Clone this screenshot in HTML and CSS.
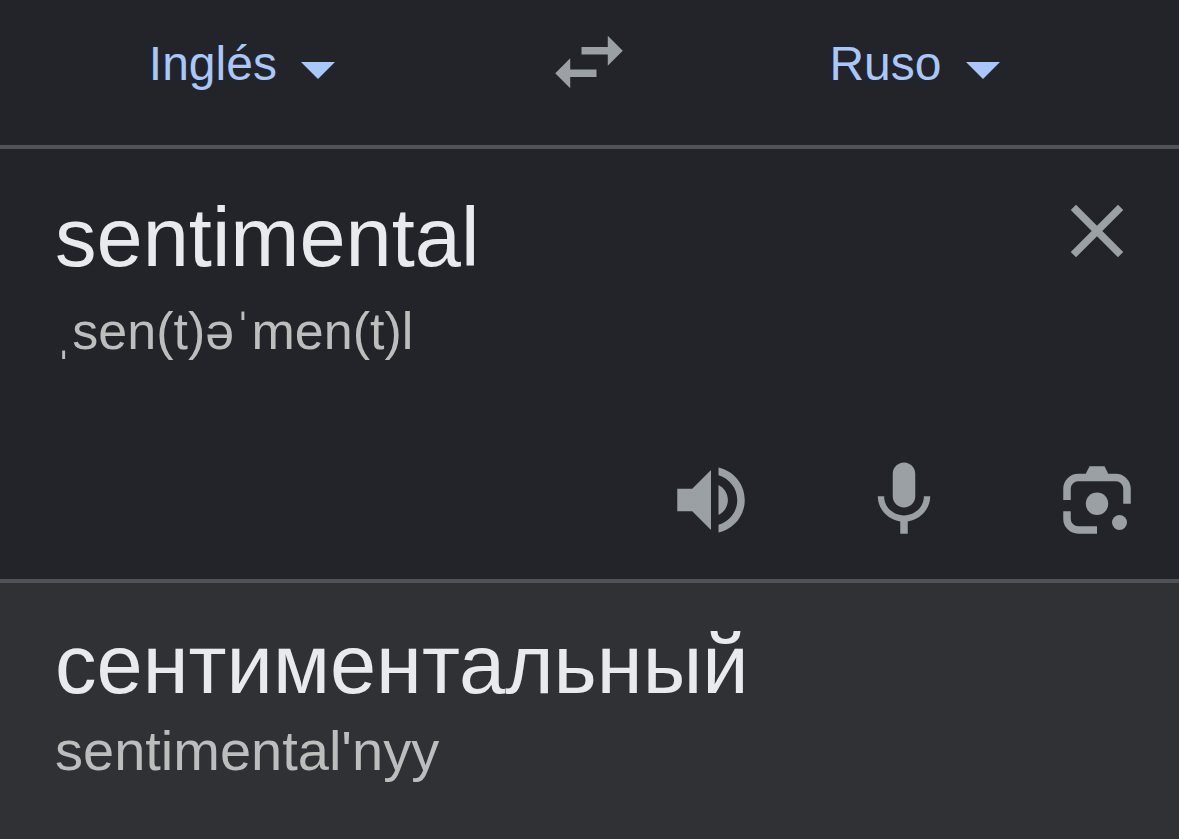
FILE: index.html
```html
<!DOCTYPE html>
<html lang="es">
<head>
<meta charset="utf-8">
<meta name="viewport" content="width=device-width, initial-scale=1">
<title>Traductor</title>
<link rel="stylesheet" href="styles.css">
</head>
<body>
<header class="languages">
  <label class="picker">
    <select class="picker-select" aria-label="Idioma de origen"><option>Inglés</option></select>
    <svg class="caret" viewBox="0 0 34 17" aria-hidden="true"><path d="M0 0h34L17 17z"/></svg>
  </label>
  <button class="icon-button" type="button" aria-label="Intercambiar idiomas">
    <svg class="icon" viewBox="0 0 24 24" aria-hidden="true"><path d="M6.99 11 3 15l3.99 4v-3H14v-2H6.99v-3zM21 9l-3.99-4v3H10v2h7.01v3L21 9z"/></svg>
  </button>
  <label class="picker">
    <select class="picker-select" aria-label="Idioma de destino"><option>Ruso</option></select>
    <svg class="caret" viewBox="0 0 34 17" aria-hidden="true"><path d="M0 0h34L17 17z"/></svg>
  </label>
</header>
<main class="translator">
  <section class="source">
    <div class="source-top">
      <div class="source-text">
        <input class="word" type="text" value="sentimental" aria-label="Texto de origen" spellcheck="false">
        <p class="phonetic">ˌsen(t)əˈmen(t)l</p>
      </div>
      <button class="icon-button" type="button" aria-label="Borrar texto">
        <svg class="icon" viewBox="0 0 24 24" aria-hidden="true"><path d="M19 6.41 17.59 5 12 10.59 6.41 5 5 6.41 10.59 12 5 17.59 6.41 19 12 13.41 17.59 19 19 17.59 13.41 12z"/></svg>
      </button>
    </div>
    <div class="actions">
      <button class="icon-button" type="button" aria-label="Escuchar">
        <svg class="icon" viewBox="0 0 24 24" aria-hidden="true"><path d="M3 9v6h4l5 5V4L7 9H3zm13.5 3c0-1.77-1.02-3.29-2.5-4.03v8.05c1.48-.73 2.5-2.25 2.5-4.02zM14 3.33v2.06c2.89.86 5 3.44 5 6.61s-2.11 5.75-5 6.61v2.06c4.01-.91 7-4.39 7-8.67s-2.99-7.76-7-8.67z"/></svg>
      </button>
      <button class="icon-button" type="button" aria-label="Hablar">
        <svg class="icon" viewBox="0 0 24 24" aria-hidden="true"><path d="M12 14c1.66 0 3-1.34 3-3V5c0-1.66-1.34-3-3-3S9 3.34 9 5v6c0 1.66 1.34 3 3 3zM17.3 11c0 3-2.54 5.1-5.3 5.1S6.7 14 6.7 11H5c0 3.41 2.72 6.23 6 6.72V21h2v-3.28c3.28-.48 6-3.3 6-6.72h-1.7z"/></svg>
      </button>
      <button class="icon-button" type="button" aria-label="Traducir con la cámara">
        <svg class="icon" viewBox="0 0 24 24" aria-hidden="true"><path d="M3 12V9a4 4 0 0 1 4-4h2l1-2h4l1 2h2a4 4 0 0 1 4 4v4h-2V9a2 2 0 0 0-2-2H7a2 2 0 0 0-2 2v3zM3 15h2v2a2 2 0 0 0 2 2h5v2H7a4 4 0 0 1-4-4z"/><circle cx="12" cy="13" r="3"/><circle cx="18" cy="18" r="2"/></svg>
      </button>
    </div>
  </section>
  <section class="result">
    <p class="word" lang="ru">сентиментальный</p>
    <p class="phonetic">sentimental'nyy</p>
  </section>
</main>
</body>
</html>
```
FILE: styles.css
```css
* {
  box-sizing: border-box;
}

body {
  margin: 0;
  min-height: 100vh;
  display: flex;
  flex-direction: column;
  background: #232429;
  color: #e9eaee;
  font-family: "Liberation Sans", Arial, sans-serif;
}

.languages {
  display: grid;
  grid-template-columns: 32fr 14fr 29fr 3fr;
  align-items: center;
  justify-items: center;
  padding: 17px 0 38px;
  border-bottom: 4px solid #515257;
}

.picker {
  display: flex;
  align-items: center;
  gap: 24px;
  padding-top: 4px;
  color: #a8c7fa;
}

.picker-select {
  appearance: none;
  field-sizing: content;
  margin: 0;
  padding: 0;
  border: 0;
  background: transparent;
  color: inherit;
  font-family: inherit;
  font-size: 48px;
  line-height: 56px;
}

.caret {
  width: 34px;
  height: 17px;
  margin-top: 12px;
  fill: currentColor;
  pointer-events: none;
}

.icon-button {
  flex: none;
  display: flex;
  padding: 0;
  border: 0;
  background: transparent;
  color: #9aa0a4;
}

.icon {
  width: 90px;
  height: 90px;
  fill: currentColor;
}

.translator {
  flex: 1;
  display: flex;
  flex-direction: column;
}

.source {
  padding: 37px 37px 34px 55px;
  border-bottom: 4px solid #515257;
}

.source-top {
  display: flex;
  align-items: flex-start;
}

.source-text {
  flex: 1;
  min-width: 0;
  padding-top: 4px;
}

.word {
  display: block;
  width: 100%;
  height: 96px;
  margin: 0;
  padding: 0;
  border: 0;
  background: transparent;
  color: inherit;
  font-family: inherit;
  font-size: 83px;
  line-height: 96px;
}

.phonetic {
  margin: 13px 0 0;
  color: #bdbdbd;
  font-size: 52px;
  line-height: 64px;
}

.actions {
  display: flex;
  justify-content: flex-end;
  gap: 103px;
  margin-top: 92px;
}

.result {
  flex: 1;
  padding: 34px 55px;
  background: #303135;
}

.result .phonetic {
  margin-top: 6px;
  font-size: 56px;
}
```
